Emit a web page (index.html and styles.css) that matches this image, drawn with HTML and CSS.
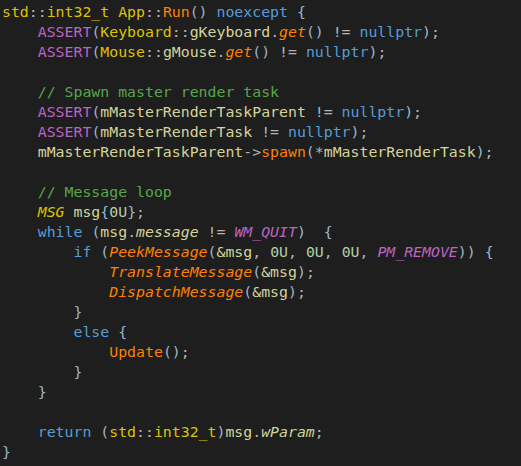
FILE: index.html
```
<!DOCTYPE HTML>
<html>
	<head>
		<meta charset='utf-8' />
		<title>App::Run</title>
		<link rel="stylesheet" href="styles.css">
	</head>
	<body>
		<pre class='code'><span class='ty'>std</span><span class='op'>::</span><span class='ty'>int32_t</span> <span class='ty'>App</span><span class='op'>::</span><span class='fn'>Run</span><span class='br'>()</span> <span class='kw'>noexcept</span> <span class='br'>{</span>
    <span class='mc'>ASSERT</span><span class='br'>(</span><span class='ty'>Keyboard</span><span class='op'>::</span><span class='va'>gKeyboard</span><span class='op'>.</span><span class='fn it'>get</span><span class='br'>()</span> <span class='op'>!=</span> <span class='kw'>nullptr</span><span class='br'>)</span><span class='op'>;</span>
    <span class='mc'>ASSERT</span><span class='br'>(</span><span class='ty'>Mouse</span><span class='op'>::</span><span class='va'>gMouse</span><span class='op'>.</span><span class='fn it'>get</span><span class='br'>()</span> <span class='op'>!=</span> <span class='kw'>nullptr</span><span class='br'>)</span><span class='op'>;</span>

    <span class='cm'>// Spawn master render task</span>
    <span class='mc'>ASSERT</span><span class='br'>(</span><span class='va'>mMasterRenderTaskParent</span> <span class='op'>!=</span> <span class='kw'>nullptr</span><span class='br'>)</span><span class='op'>;</span>
    <span class='mc'>ASSERT</span><span class='br'>(</span><span class='va'>mMasterRenderTask</span> <span class='op'>!=</span> <span class='kw'>nullptr</span><span class='br'>)</span><span class='op'>;</span>
    <span class='va'>mMasterRenderTaskParent</span><span class='op'>-&gt;</span><span class='fn'>spawn</span><span class='br'>(</span><span class='op'>*</span><span class='va'>mMasterRenderTask</span><span class='br'>)</span><span class='op'>;</span>

    <span class='cm'>// Message loop</span>
    <span class='ty it'>MSG</span> <span class='va'>msg</span><span class='br'>{</span><span class='nu'>0U</span><span class='br'>}</span><span class='op'>;</span>
    <span class='kw'>while</span> <span class='br'>(</span><span class='va'>msg</span><span class='op'>.</span><span class='va it'>message</span> <span class='op'>!=</span> <span class='mc it'>WM_QUIT</span><span class='br'>)</span>  <span class='br'>{</span>
        <span class='kw'>if</span> <span class='br'>(</span><span class='fn it'>PeekMessage</span><span class='br'>(</span><span class='va'>&amp;msg</span><span class='op'>,</span> <span class='nu'>0U</span><span class='op'>,</span> <span class='nu'>0U</span><span class='op'>,</span> <span class='nu'>0U</span><span class='op'>,</span> <span class='mc it'>PM_REMOVE</span><span class='br'>))</span> <span class='br'>{</span>
            <span class='fn it'>TranslateMessage</span><span class='br'>(</span><span class='va'>&amp;msg</span><span class='br'>)</span><span class='op'>;</span>
            <span class='fn it'>DispatchMessage</span><span class='br'>(</span><span class='va'>&amp;msg</span><span class='br'>)</span><span class='op'>;</span>
        <span class='br'>}</span>
        <span class='kw'>else</span> <span class='br'>{</span>
            <span class='fn'>Update</span><span class='br'>()</span><span class='op'>;</span>
        <span class='br'>}</span>
    <span class='br'>}</span>

    <span class='kw'>return</span> <span class='br'>(</span><span class='ty'>std</span><span class='op'>::</span><span class='ty'>int32_t</span><span class='br'>)</span><span class='va'>msg</span><span class='op'>.</span><span class='va it'>wParam</span><span class='op'>;</span>
<span class='br'>}</span></pre>
	</body>
</html>
```
FILE: styles.css
```
body{
	margin:0;
	background:#1e1e1e;
}
.code{
	margin:0;
	padding:2px 0 0 2px;
	font-family:"DejaVu Sans Mono", monospace;
	font-size:14.85px;
	line-height:20px;
	color:#dcdcaa;
}
.code .kw{ color:#569cd6; }
.code .ty{ color:#dcc300; }
.code .fn{ color:#ff8000; }
.code .mc{ color:#bd63c5; }
.code .va{ color:#d4d49a; }
.code .op{ color:#b4b4b4; }
.code .br{ color:#9cb6cc; }
.code .cm{ color:#57a64a; }
.code .nu{ color:#b5cea8; }
.code .it{ font-style:italic; }
```
